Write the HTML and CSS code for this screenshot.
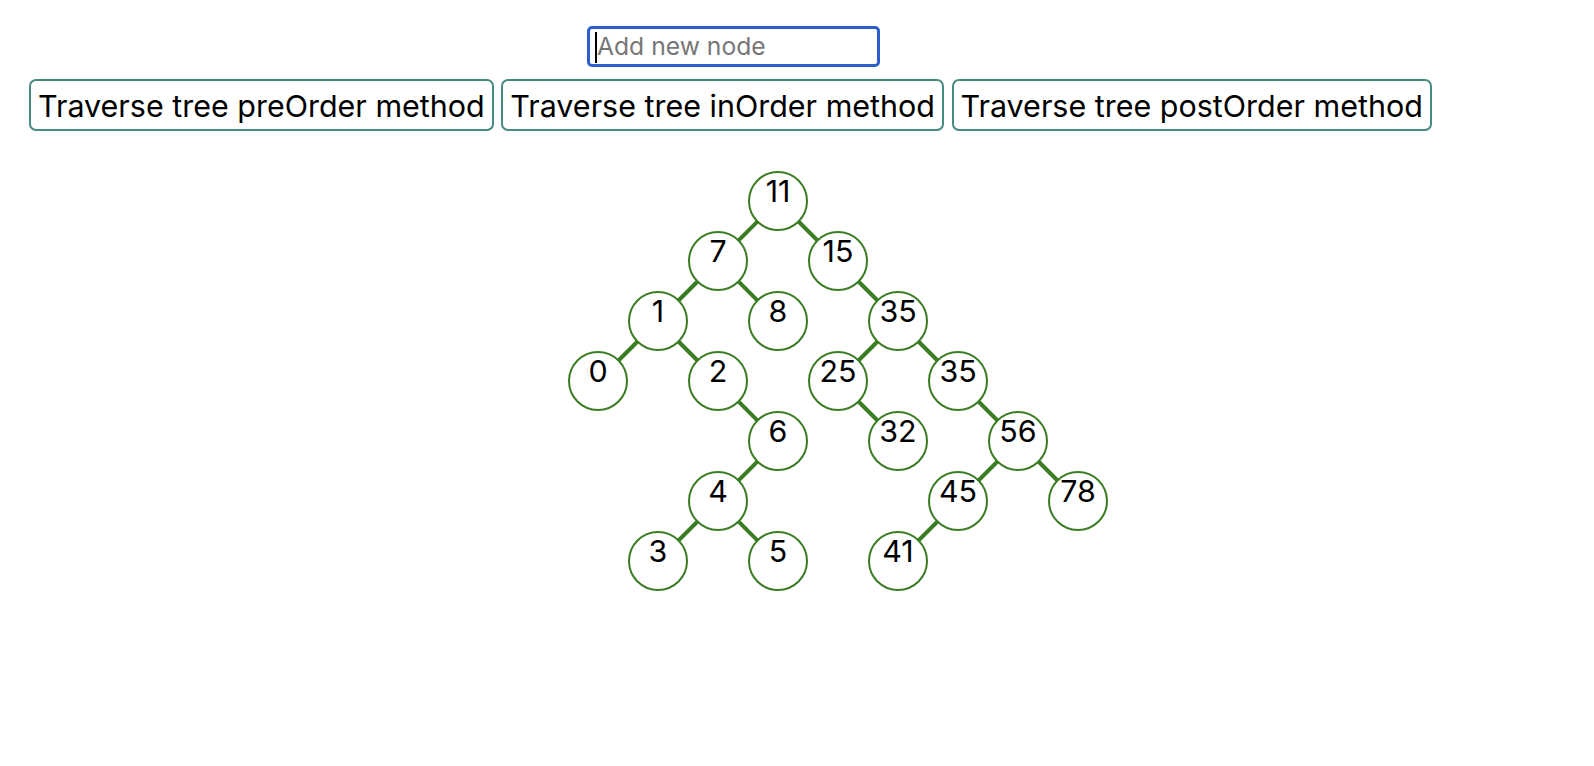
FILE: index.html
```html
<!DOCTYPE html>
<html>
<head>
<meta charset="utf-8">
<title>Binary Search Tree</title>
<link rel="stylesheet" href="styles.css">
</head>
<body>
<div class="controls">
  <div class="input-wrap">
    <input class="node-input" type="text" placeholder="Add new node">
    <span class="caret"></span>
  </div>
  <div class="buttons">
    <button class="btn">Traverse tree preOrder method</button>
    <button class="btn">Traverse tree inOrder method</button>
    <button class="btn">Traverse tree postOrder method</button>
  </div>
</div>
<div class="tree">
  <svg class="edges" width="1594" height="440" viewBox="0 0 1594 440">
    <g stroke="#3b7d23" stroke-width="4" stroke-linecap="butt">
      <line x1="778" y1="30" x2="718" y2="90"/>
      <line x1="778" y1="30" x2="838" y2="90"/>
      <line x1="718" y1="90" x2="658" y2="150"/>
      <line x1="718" y1="90" x2="778" y2="150"/>
      <line x1="658" y1="150" x2="598" y2="210"/>
      <line x1="658" y1="150" x2="718" y2="210"/>
      <line x1="718" y1="210" x2="778" y2="270"/>
      <line x1="778" y1="270" x2="718" y2="330"/>
      <line x1="718" y1="330" x2="658" y2="390"/>
      <line x1="718" y1="330" x2="778" y2="390"/>
      <line x1="838" y1="90" x2="898" y2="150"/>
      <line x1="898" y1="150" x2="838" y2="210"/>
      <line x1="898" y1="150" x2="958" y2="210"/>
      <line x1="838" y1="210" x2="898" y2="270"/>
      <line x1="958" y1="210" x2="1018" y2="270"/>
      <line x1="1018" y1="270" x2="958" y2="330"/>
      <line x1="1018" y1="270" x2="1078" y2="330"/>
      <line x1="958" y1="330" x2="898" y2="390"/>
    </g>
  </svg>
  <div class="node" style="left:748px;top:0px">11</div>
  <div class="node" style="left:688px;top:60px">7</div>
  <div class="node" style="left:808px;top:60px">15</div>
  <div class="node" style="left:628px;top:120px">1</div>
  <div class="node" style="left:748px;top:120px">8</div>
  <div class="node" style="left:868px;top:120px">35</div>
  <div class="node" style="left:568px;top:180px">0</div>
  <div class="node" style="left:688px;top:180px">2</div>
  <div class="node" style="left:808px;top:180px">25</div>
  <div class="node" style="left:928px;top:180px">35</div>
  <div class="node" style="left:748px;top:240px">6</div>
  <div class="node" style="left:868px;top:240px">32</div>
  <div class="node" style="left:988px;top:240px">56</div>
  <div class="node" style="left:688px;top:300px">4</div>
  <div class="node" style="left:928px;top:300px">45</div>
  <div class="node" style="left:1048px;top:300px">78</div>
  <div class="node" style="left:628px;top:360px">3</div>
  <div class="node" style="left:748px;top:360px">5</div>
  <div class="node" style="left:868px;top:360px">41</div>
</div>
</body>
</html>
```
FILE: styles.css
```css
html, body {
  margin: 0;
  padding: 0;
  background: #ffffff;
}

body {
  font-family: Inter, "Liberation Sans", sans-serif;
  color: #000000;
}

.controls {
  display: inline-flex;
  flex-direction: column;
  align-items: center;
  padding: 26px 0 0 29px;
}

.input-wrap {
  position: relative;
  margin-left: 6px;
  display: flex;
}

.node-input {
  box-sizing: border-box;
  width: 293px;
  height: 41px;
  border: 3px solid #2c5fcb;
  border-radius: 5px;
  padding: 0 6px 1px 7px;
  font-family: Inter, "Liberation Sans", sans-serif;
  font-size: 24.7px;
  color: #000000;
  outline: none;
  background: #ffffff;
}

.node-input::placeholder {
  color: #777777;
}

.caret {
  position: absolute;
  left: 8px;
  top: 6px;
  width: 2px;
  height: 31px;
  background: #000000;
}

.buttons {
  display: flex;
  gap: 7.5px;
  margin-top: 12px;
}

.btn {
  box-sizing: border-box;
  height: 52px;
  padding: 0 7px;
  border: 2px solid #468a80;
  border-radius: 7px;
  background: #ffffff;
  font-family: Inter, "Liberation Sans", sans-serif;
  font-size: 30.47px;
  color: #000000;
  white-space: nowrap;
  cursor: pointer;
}

.tree {
  position: relative;
  height: 440px;
  margin-top: 40px;
}

.edges {
  position: absolute;
  left: 0;
  top: 0;
}

.node {
  position: absolute;
  box-sizing: border-box;
  width: 60px;
  height: 60px;
  border: 2px solid #3b7d23;
  border-radius: 50%;
  background: #ffffff;
  font-size: 30.4px;
  line-height: normal;
  text-align: center;
}
```
